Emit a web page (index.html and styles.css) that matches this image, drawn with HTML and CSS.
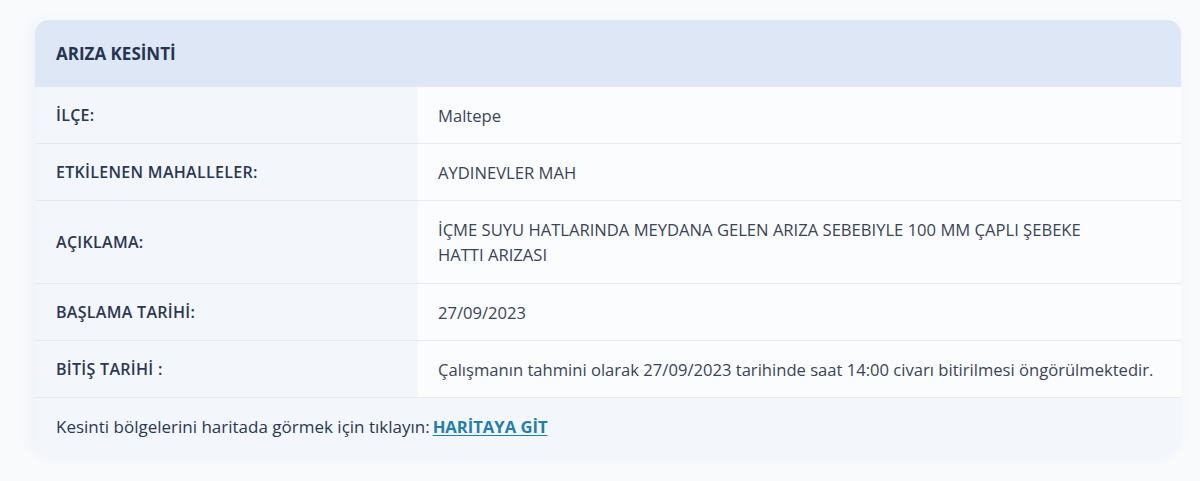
FILE: index.html
```html
<!DOCTYPE html>
<html lang="tr">
<head>
    <meta charset="UTF-8">
    <meta name="viewport" content="width=device-width, initial-scale=1.0">
    <title>Arıza Kesinti</title>
    <link rel="stylesheet" href="styles.css">
</head>
<body>
    <div class="card">
        <div class="card-header">ARIZA KESİNTİ</div>
        <div class="info-row">
            <div class="info-label">İLÇE:</div>
            <div class="info-value">Maltepe</div>
        </div>
        <div class="info-row">
            <div class="info-label">ETKİLENEN MAHALLELER:</div>
            <div class="info-value">AYDINEVLER MAH</div>
        </div>
        <div class="info-row">
            <div class="info-label">AÇIKLAMA:</div>
            <div class="info-value tall">İÇME SUYU HATLARINDA MEYDANA GELEN ARIZA SEBEBIYLE 100 MM ÇAPLI ŞEBEKE HATTI ARIZASI</div>
        </div>
        <div class="info-row">
            <div class="info-label">BAŞLAMA TARİHİ:</div>
            <div class="info-value">27/09/2023</div>
        </div>
        <div class="info-row">
            <div class="info-label">BİTİŞ TARİHİ :</div>
            <div class="info-value">Çalışmanın tahmini olarak 27/09/2023 tarihinde saat 14:00 civarı bitirilmesi öngörülmektedir.</div>
        </div>
        <div class="card-footer">
            Kesinti bölgelerini haritada görmek için tıklayın: <a href="#" class="map-link">HARİTAYA GİT</a>
        </div>
    </div>
</body>
</html>
```

FILE: styles.css
```css
body {
    margin: 0;
    padding: 20px 19px 28px 35px;
    background-color: #f9fafc;
    font-family: "Open Sans", "Lato", sans-serif;
    font-size: 16.6px;
    color: #2d3a52;
}

.card {
    background-color: #f3f6fb;
    border-radius: 14px;
    overflow: hidden;
    box-shadow: -4px 2px 14px rgba(60, 80, 120, 0.05);
}

.card-header {
    background-color: #dde7f6;
    height: 67px;
    display: flex;
    align-items: center;
    padding-left: 21px;
    font-size: 17px;
    font-weight: 700;
    color: #25344f;
}

.info-row {
    display: grid;
    grid-template-columns: 383px 1fr;
    border-bottom: 1px solid #e6e9ef;
}

.info-label {
    padding: 0 21px;
    display: flex;
    align-items: center;
    min-height: 56px;
    background-color: #f3f6fb;
    font-size: 16px;
    font-weight: 600;
    letter-spacing: 0.3px;
    color: #2a3852;
}

.info-value {
    padding: 0 20px;
    display: flex;
    align-items: center;
    min-height: 56px;
    background-color: #fbfcfe;
    color: #3a4458;
    line-height: 25px;
}

.info-value.tall {
    min-height: 82px;
    padding-right: 80px;
}

.card-footer {
    height: 56px;
    display: flex;
    align-items: center;
    padding-left: 21px;
    font-size: 17px;
    color: #2a3852;
}

.map-link {
    margin-left: 3px;
    font-size: 16.6px;
    color: #1f7fae;
    font-weight: 700;
    text-decoration: underline;
    text-underline-offset: 2px;
}
```
